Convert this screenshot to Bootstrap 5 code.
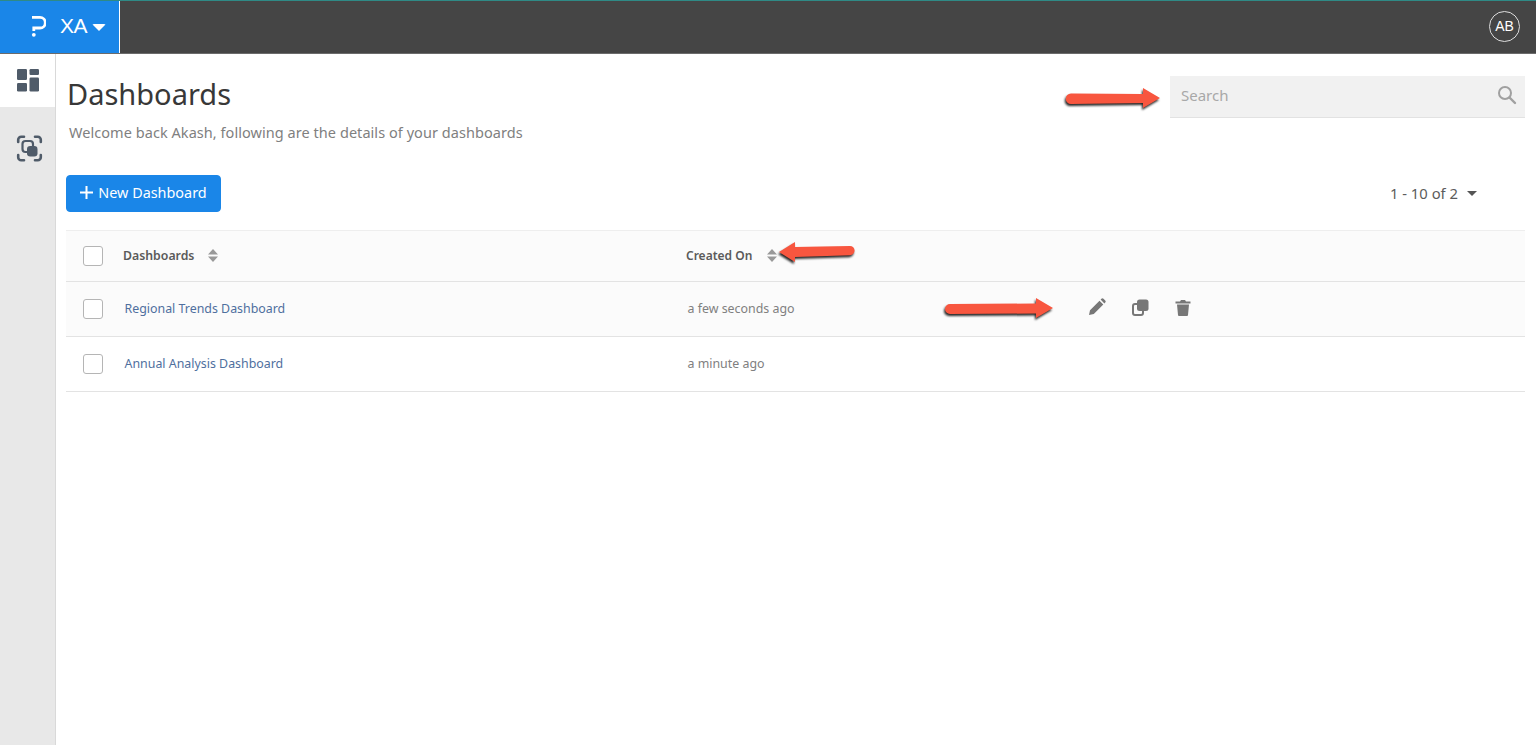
<!DOCTYPE html>
<html lang="en">
<head>
<meta charset="utf-8">
<title>Dashboards</title>
<link href="https://cdn.jsdelivr.net/npm/bootstrap@5.3.0/dist/css/bootstrap.min.css" rel="stylesheet">
<style>
html,body{height:745px;overflow:hidden}
body{font-family:"Noto Sans","Open Sans",sans-serif;color:#333;background:#fff}
.topbar{height:54px;background:#454545;border-top:1px solid #2f8a86;border-bottom:1px solid #6b6b6b}
.brandbox{width:120px;background:#1a86e8;border-right:1px solid #fff;color:#fff;padding:0 0 3px 31px;gap:14px}
.brandname{font-family:"Liberation Sans",sans-serif;font-size:21px;letter-spacing:-.5px;line-height:1}
.caret-w{width:0;height:0;border-left:7px solid transparent;border-right:7px solid transparent;border-top:7px solid #fff;margin-left:5px;margin-top:3px;border-radius:2px}
.avatar{width:31px;height:31px;border:1px solid #ddd;border-radius:50%;color:#fff;font-family:"Liberation Sans",sans-serif;font-size:14px;margin:0 16px 2px 0}
.shell{height:691px}
.siderail{width:56px;background:#e8e8e8;border-right:1px solid #d9d9d9}
.railitem{height:53px;padding-left:16px}
.railitem-on{background:#fff;width:55px}
.railsecond{padding-top:28px}
.mainpane{padding:0 11px 0 10px;min-width:0}
.headrow{height:121px}
.pagetitle{font-size:29px;font-weight:400;line-height:40px;margin:20px 0 0 1px;color:#383838}
.subtitle{font-size:14.5px;color:#808080;margin:8px 0 0 3px;line-height:20px;letter-spacing:.05px}
.searchbox{width:355px;height:42px;margin-top:22px;background:#f1f1f1;border-bottom:1px solid #e2e2e2;padding:0 0 2px 11px;color:#a8a8a8;font-size:15px;position:relative}
.searchicon{position:absolute;right:8px;top:9px}
.toolrow{height:55px}
.newbtn{background:#1a86e8;border-color:#1a86e8;color:#fff;height:37px;width:155px;font-size:14.4px;border-radius:4px;padding:0 0 2px;gap:5px}
.newbtn:hover{background:#1a86e8;color:#fff}
.pager{font-size:14.8px;color:#5c5c5c;margin-right:48px;gap:9px;height:37px}
.caret-g{width:0;height:0;border-left:5.5px solid transparent;border-right:5.5px solid transparent;border-top:5.5px solid #555}
.grid-t{width:1459px;table-layout:fixed;margin:0;border-top:1px solid #eee}
.grid-t th,.grid-t td{padding:0;vertical-align:middle;border-bottom:1px solid #e3e3e3;background:transparent;box-shadow:none}
.grid-t thead tr{height:51px;background:#fbfbfb}
.grid-t tbody tr{height:55px}
.rowtint{background:#fbfbfb}
.fakebox{display:block;width:20px;height:20px;border:1px solid #b5b5b5;border-radius:3px;background:#fff;margin-left:17px}
.grid-t th{font-size:12.3px;font-weight:600;color:#5a5a5a}
.grid-t th.tighter{font-size:12px}
.grid-t td{font-size:12.4px;color:#808080}
.grid-t td.shifted{padding-left:1.500px}
.linkname{color:#4f6f9e;text-decoration:none}
.sorter{margin-left:13.500px;vertical-align:-2px}
.tighter .sorter{margin-left:14.500px}
.acts{gap:26px;padding-left:142px;margin-bottom:4px}
.anno{position:absolute;overflow:visible;pointer-events:none;filter:drop-shadow(-1px 2px 1.200px rgba(0,0,0,.85))}
.anno-a{left:1065px;top:86px}
.anno-b{left:778px;top:240px}
.anno-c{left:944px;top:296px}
</style>
</head>
<body>
<header class="topbar d-flex justify-content-between">
  <div class="brandbox d-flex align-items-center">
    <svg width="15" height="22" viewBox="0 0 15 22" fill="none" aria-hidden="true"><path d="M1 2.400h8a5.300 5.300 0 0 1 0 10.600H2.800v3" stroke="#fff" stroke-width="2.800"/><circle cx="2.800" cy="19.800" r="1.900" fill="#fff"/></svg>
    <span class="d-flex align-items-center"><span class="brandname">XA</span><span class="caret-w"></span></span>
  </div>
  <div class="d-flex align-items-center"><span class="avatar d-flex align-items-center justify-content-center">AB</span></div>
</header>
<div class="shell d-flex">
  <nav class="siderail flex-shrink-0">
    <div class="railitem railitem-on d-flex align-items-center">
      <svg width="23" height="23" viewBox="0 0 23 23" fill="#4f5b69" aria-hidden="true"><rect x="1" y="0" width="10" height="11" rx="1.200"/><rect x="1" y="14" width="10" height="8.500" rx="1.200"/><rect x="13.500" y="0" width="9.500" height="6" rx="1.200"/><rect x="13.500" y="8.500" width="9.500" height="14" rx="1.200"/></svg>
    </div>
    <div class="railitem railsecond">
      <svg width="27" height="27" viewBox="0 0 27 27" fill="none" aria-hidden="true"><path d="M2.200 7V4.700a3 3 0 0 1 3-3H8M19 1.700h2.800a3 3 0 0 1 3 3V7M24.800 20v2.300a3 3 0 0 1-3 3H19M8 25.300H5.200a3 3 0 0 1-3-3V20" stroke="#4f5b69" stroke-width="2.600" stroke-linecap="round"/><rect x="6.500" y="6" width="10.500" height="11" rx="3" stroke="#4f5b69" stroke-width="2.200"/><rect x="11" y="11" width="10.500" height="10.500" rx="3.200" fill="#4f5b69"/></svg>
    </div>
  </nav>
  <main class="mainpane flex-grow-1">
    <div class="headrow d-flex justify-content-between align-items-start">
      <div>
        <h1 class="pagetitle">Dashboards</h1>
        <p class="subtitle">Welcome back Akash, following are the details of your dashboards</p>
      </div>
      <div class="searchbox d-flex align-items-center">Search
        <svg class="searchicon" width="20" height="20" viewBox="0 0 20 20" fill="none" aria-hidden="true"><circle cx="8" cy="8" r="6" stroke="#a0a0a0" stroke-width="2"/><path d="M12.500 12.500 18 18" stroke="#a0a0a0" stroke-width="2.400" stroke-linecap="round"/></svg>
      </div>
    </div>
    <div class="toolrow d-flex justify-content-between align-items-start">
      <button type="button" class="btn newbtn d-flex align-items-center justify-content-center">
        <svg width="13" height="13" viewBox="0 0 13 13" aria-hidden="true"><path d="M6.500 0v13M0 6.500h13" stroke="#fff" stroke-width="2"/></svg>New Dashboard
      </button>
      <div class="pager d-flex align-items-center"><span>1 - 10 of 2</span><span class="caret-g"></span></div>
    </div>
    <table class="table grid-t">
      <colgroup><col style="width:57px"><col style="width:563px"><col style="width:260px"><col></colgroup>
      <thead>
        <tr>
          <th><span class="fakebox"></span></th>
          <th>Dashboards<svg class="sorter" width="10" height="13" viewBox="0 0 10 13" fill="#999" aria-hidden="true"><path d="M5 0 10 5.500H0zM5 13 0 7.500h10z"/></svg></th>
          <th class="tighter">Created On<svg class="sorter" width="10" height="13" viewBox="0 0 10 13" fill="#999" aria-hidden="true"><path d="M5 0 10 5.500H0zM5 13 0 7.500h10z"/></svg></th>
          <th></th>
        </tr>
      </thead>
      <tbody>
        <tr class="rowtint">
          <td><span class="fakebox"></span></td>
          <td class="shifted"><a class="linkname" href="#">Regional Trends Dashboard</a></td>
          <td class="shifted">a few seconds ago</td>
          <td>
            <div class="acts d-flex align-items-center">
              <svg width="18" height="18" viewBox="0 0 18 18" fill="#777" aria-hidden="true"><path d="M1 17l1-4.800L11.500 2.700l3.800 3.800L5.800 16zM12.600 1.600l.8-.8a1.500 1.500 0 0 1 2.100 0l1.700 1.700a1.500 1.500 0 0 1 0 2.100l-.8.800z"/></svg>
              <svg width="17" height="17" viewBox="0 0 17 17" aria-hidden="true"><rect x="1" y="5" width="10" height="11" rx="2" fill="none" stroke="#777" stroke-width="2"/><rect x="5" y="0.500" width="11.500" height="11.500" rx="2.500" fill="#777"/></svg>
              <svg width="16" height="17" viewBox="0 0 16 17" fill="#777" aria-hidden="true"><path d="M0.500 2.500H5L6 1h4l1 1.500h4.500v2H.5zM2 5.500h12L13 16a1 1 0 0 1-1 1H4a1 1 0 0 1-1-1z"/></svg>
            </div>
          </td>
        </tr>
        <tr>
          <td><span class="fakebox"></span></td>
          <td class="shifted"><a class="linkname" href="#">Annual Analysis Dashboard</a></td>
          <td class="shifted">a minute ago</td>
          <td></td>
        </tr>
      </tbody>
    </table>
  </main>
</div>
<svg class="anno anno-a" width="96" height="24" viewBox="0 0 96 24" aria-hidden="true"><path d="M6 7.500 78 8V2l17 10-17 10v-5L6 18a5 5 0 0 1 0-10.500z" fill="#f8563f"/></svg>
<svg class="anno anno-b" width="78" height="24" viewBox="0 0 78 24" aria-hidden="true"><path d="M17 2v5l55-1a4.600 4.600 0 0 1 0 9.200L17 17v5L1 12z" fill="#f8563f"/></svg>
<svg class="anno anno-c" width="110" height="24" viewBox="0 0 110 24" aria-hidden="true"><path d="M6 8 92 7.500V2l17 10-17 10v-4.500L6 18a5 5 0 0 1 0-10z" fill="#f8563f"/></svg>
<script src="https://cdn.jsdelivr.net/npm/bootstrap@5.3.0/dist/js/bootstrap.bundle.min.js"></script>
</body>
</html>
